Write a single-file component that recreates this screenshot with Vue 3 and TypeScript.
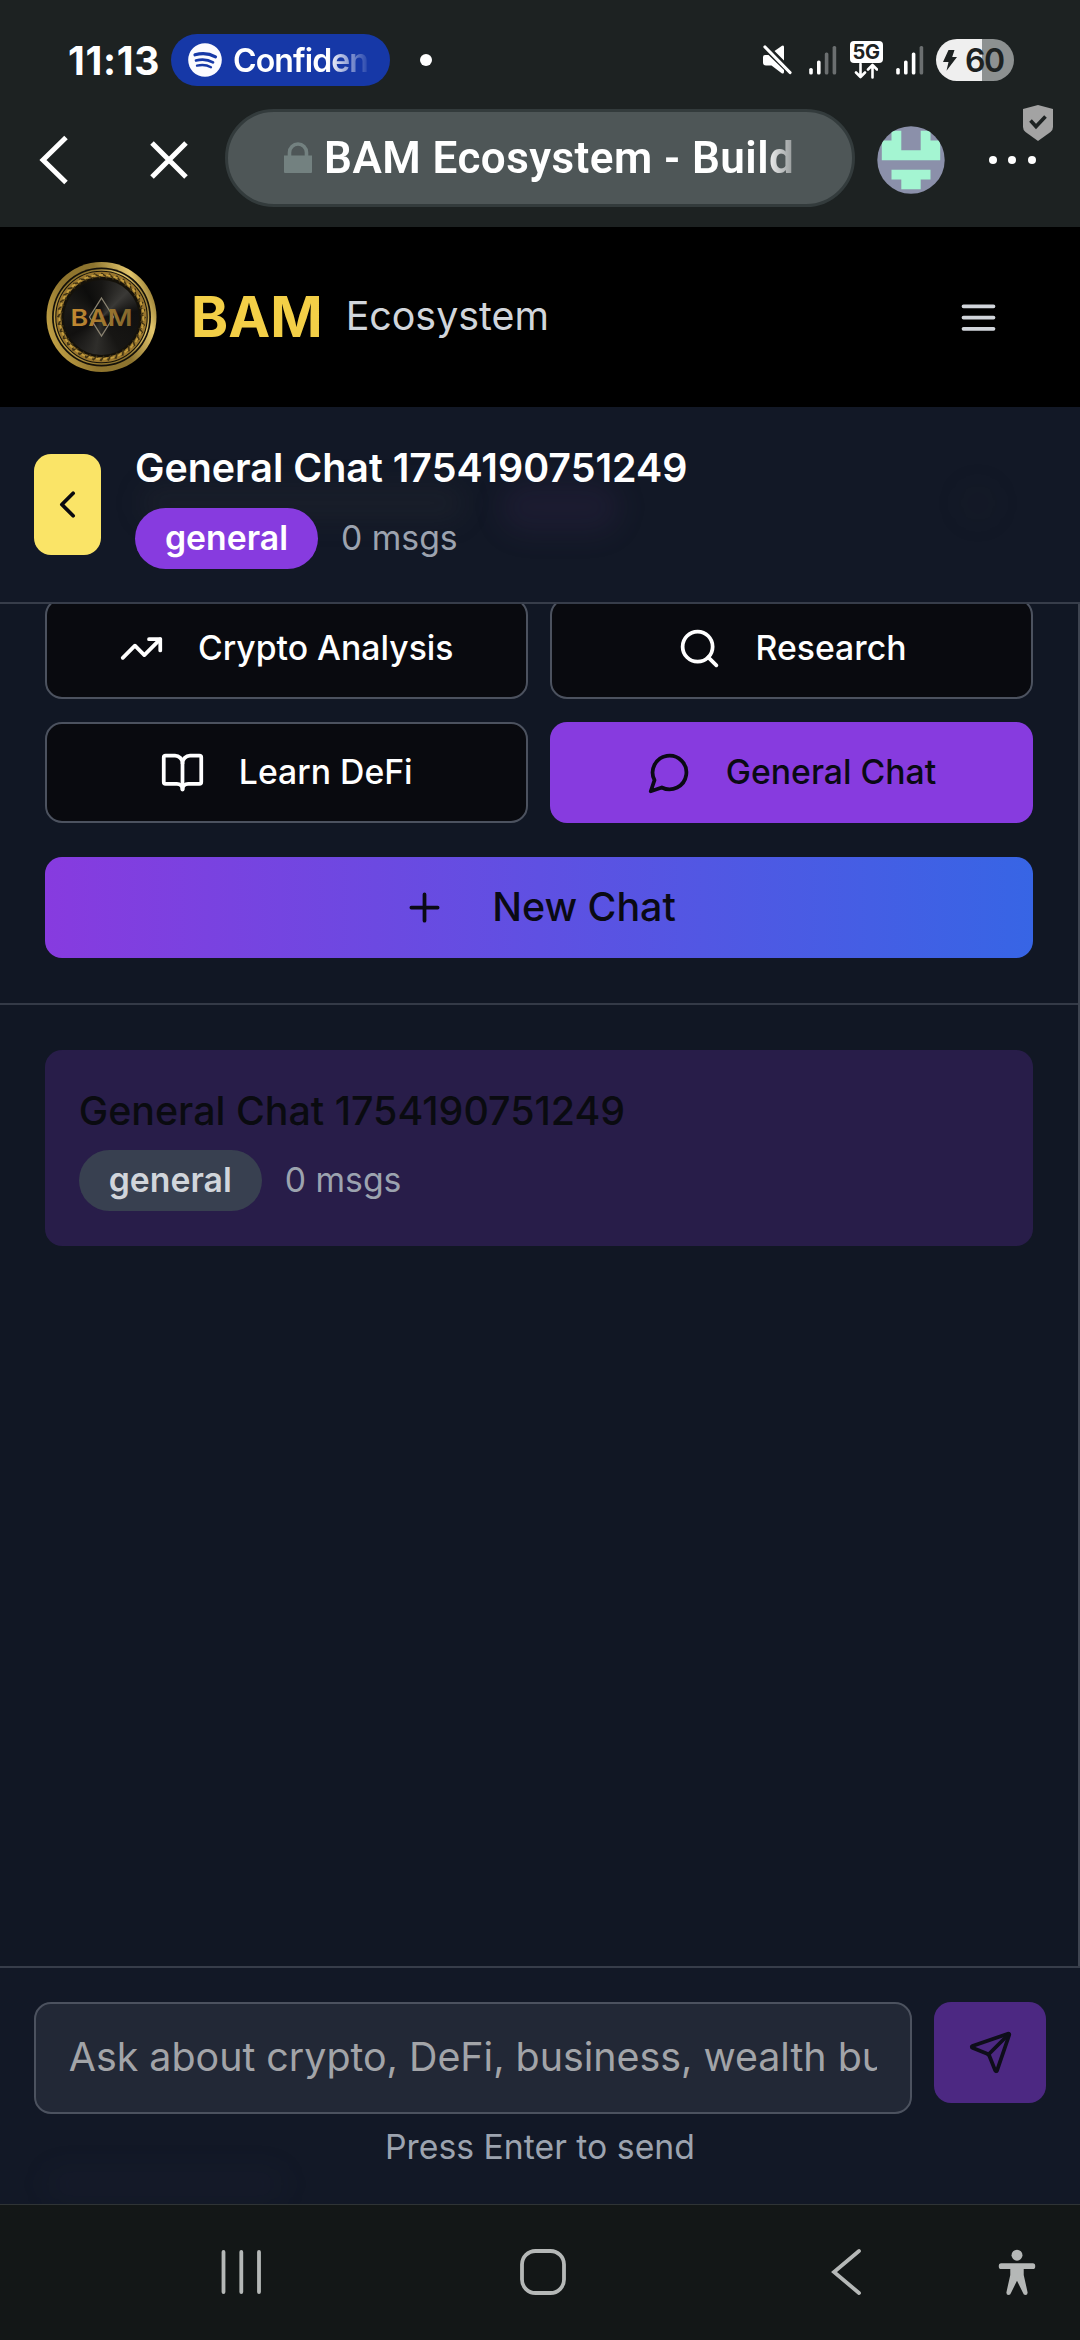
<script setup lang="ts">
interface Topic {
  label: string
  paths: string[]
  active?: boolean
}

const topics: Topic[] = [
  { label: 'Crypto Analysis', paths: ['M22 7 13.5 15.5 8.5 10.5 2 17', 'M16 7h6v6'] },
  { label: 'Research', paths: ['M19 11a8 8 0 1 1-16 0 8 8 0 0 1 16 0Z', 'm21 21-4.3-4.3'] },
  {
    label: 'Learn DeFi',
    paths: [
      'M12 7v14',
      'M3 18a1 1 0 0 1-1-1V4a1 1 0 0 1 1-1h5a4 4 0 0 1 4 4 4 4 0 0 1 4-4h5a1 1 0 0 1 1 1v13a1 1 0 0 1-1 1h-6a3 3 0 0 0-3 3 3 3 0 0 0-3-3z',
    ],
  },
  { label: 'General Chat', paths: ['M7.9 20A9 9 0 1 0 4 16.1L2 22Z'], active: true },
]

const chat = { title: 'General Chat 1754190751249', tag: 'general', count: '0 msgs' }
const leaves = Array.from({ length: 36 }, (_, i) => i * 10)
const signals = [
  { id: 'a', lit: 2 },
  { id: 'b', lit: 3 },
]
const bars = [6.5, 14, 22, 28.5]
</script>

<template>
  <div class="screen">
    <div class="top">
      <div class="status">
        <span class="time">11:13</span>
        <div class="now">
          <svg class="spot" viewBox="0 0 34 34">
            <circle cx="17" cy="17" r="16.8" fill="#fbfbff" />
            <g fill="none" stroke="#1638a7" stroke-linecap="round">
              <path d="M7 11.8c7-2 14.500-1.300 20.500 2" stroke-width="3.200" />
              <path d="M8 17.500c6-1.700 12-1 17 1.900" stroke-width="2.700" />
              <path d="M9 22.700c5-1.300 10-.7 14 1.600" stroke-width="2.300" />
            </g>
          </svg>
          <span class="song">Confiden</span>
        </div>
        <i class="dot"></i>
        <div class="sys">
          <svg class="mute" viewBox="0 0 30 30">
            <path d="M1 12q0-2 2-2h3.500L22 25v2q0 2-2 1.500L9.500 20.500H4q-3 0-3-3ZM12.500 6 20 .8q2-1 2 1.200v13.500Z" fill="#fff" />
            <path d="M3 2 28 27.500" stroke="#fff" stroke-width="3.200" stroke-linecap="round" />
          </svg>
          <template v-for="s in signals" :key="s.id">
            <svg class="sig" viewBox="0 0 28 30">
              <rect
                v-for="(h, i) in bars"
                :key="i"
                :x="0.2 + i * 7.8"
                :y="29.500 - h"
                width="3.600"
                :height="h"
                rx="1.600"
                :fill="i < s.lit ? '#fff' : '#6b6f70'"
              />
            </svg>
            <div v-if="s.id === 'a'" class="net">
              <b>5G</b>
              <svg viewBox="0 0 24 16">
                <path d="M6.500 1v12M2 9.500l4.500 4.500 4.500-4.500M18.500 14.500V2.500M14 6.500 18.500 2 23 6.500" fill="none" stroke="#fff" stroke-width="2.600" stroke-linejoin="round" stroke-linecap="round" />
              </svg>
            </div>
          </template>
          <div class="batt">
            <svg viewBox="0 0 14 21"><path d="M5.500 0h6L9.200 7H14L3.500 20.800 5.500 12H0Z" fill="#1d2222" /></svg>
            <b>60</b>
          </div>
        </div>
      </div>
      <div class="bar">
        <svg class="back" viewBox="0 0 30 50"><path d="M27 2.500 4 25 27 47.500" fill="none" stroke="#fff" stroke-width="5" /></svg>
        <svg class="close" viewBox="0 0 38 38"><path d="M2 2 36 36M36 2 2 36" stroke="#fff" stroke-width="5" /></svg>
        <div class="url">
          <svg class="lock" viewBox="0 0 28 32">
            <path d="M5.500 14V10.500a8.500 8.500 0 0 1 17 0V14" fill="none" stroke="#738180" stroke-width="3.600" />
            <path d="M0 13.500h28v16.500q0 1-1 1H1q-1 0-1-1Z" fill="#738180" />
          </svg>
          <span>BAM Ecosystem - Build</span>
        </div>
        <svg class="avatar" viewBox="0 0 68 68">
          <defs><clipPath id="face"><circle cx="34" cy="34" r="33.700" /></clipPath></defs>
          <g clip-path="url(#face)">
            <rect width="68" height="68" fill="#8b90aa" />
            <path d="M14.500 4.800h9.800v19.500h19.400V4.800h9.800v9.700h9.700v19.700H4.800V14.500h9.700ZM14.500 43.700h39v9.700h-9.800v9.800H24.300v-9.800h-9.800Z" fill="#a4f5d2" />
          </g>
        </svg>
        <div class="more">
          <i></i><i></i><i></i>
          <svg class="shield" viewBox="0 0 30 36">
            <path d="M15 0 30 4v18q0 3-2.500 5L15 36 2.500 27Q0 25 0 22V4Z" fill="#a3a3a3" />
            <path d="M7.500 15.500 13 21.500 22.500 11.500" fill="none" stroke="#1d2222" stroke-width="3.600" />
          </svg>
        </div>
      </div>
    </div>

    <header class="site">
      <svg class="coin" viewBox="0 0 112 112">
        <defs>
          <linearGradient id="gold" x1="0" y1="0.700" x2="1" y2="0.300">
            <stop offset="0" stop-color="#c6a548" />
            <stop offset="0.300" stop-color="#8f742d" />
            <stop offset="0.600" stop-color="#8d742f" />
            <stop offset="0.860" stop-color="#e3c66c" />
            <stop offset="1" stop-color="#8a702a" />
          </linearGradient>
          <linearGradient id="gold2" x1="0" y1="0" x2="1" y2="0">
            <stop offset="0" stop-color="#c48a31" />
            <stop offset="1" stop-color="#80662d" />
          </linearGradient>
        </defs>
        <circle cx="56.500" cy="56" r="55" fill="url(#gold)" />
        <circle cx="56.500" cy="56" r="49.500" fill="#14110a" />
        <circle cx="56.500" cy="56" r="47" fill="none" stroke="url(#gold)" stroke-width="1.500" />
        <circle cx="56.500" cy="56" r="42.700" fill="none" stroke="#99762d" stroke-width="5" />
        <g stroke="#3f3213" stroke-width="1.500">
          <path v-for="a in leaves" :key="a" d="m54 17 3-4.500 4 3" fill="none" :transform="`rotate(${a} 56.500 56)`" />
        </g>
        <circle cx="56.500" cy="56" r="42" fill="none" stroke="#c39c3d" stroke-width="2" stroke-dasharray="4 3.500" />
        <foreignObject x="19" y="18.500" width="75" height="75"><div class="disc"></div></foreignObject>
        <path d="M56.500 37 68.500 56 56.500 75 44.500 56Z" fill="none" stroke="#8a8371" stroke-width="1.300" />
        <text x="56.500" y="65" text-anchor="middle" textLength="62" lengthAdjust="spacingAndGlyphs" font-family="Inter, sans-serif" font-weight="600" font-size="23" fill="url(#gold2)">BAM</text>
      </svg>
      <strong>BAM</strong>
      <span>Ecosystem</span>
      <svg class="icon menu" viewBox="0 0 24 24"><path d="M4 6h16M4 12h16M4 18h16" /></svg>
    </header>

    <section class="head">
      <i class="ghost g1"></i><i class="ghost g2"></i><i class="ghost g3"></i>
      <button class="prev"><svg class="icon" viewBox="0 0 24 24"><path d="m15 18-6-6 6-6" /></svg></button>
      <div class="info">
        <h1>{{ chat.title }}</h1>
        <div class="meta"><span class="tag"><span>{{ chat.tag }}</span></span><span>{{ chat.count }}</span></div>
      </div>
    </section>

    <main class="side">
      <div class="actions">
        <div class="topics">
          <button v-for="t in topics" :key="t.label" :class="['topic', { active: t.active }]">
            <svg class="icon" viewBox="0 0 24 24"><path v-for="p in t.paths" :key="p" :d="p" /></svg>
            <span>{{ t.label }}</span>
          </button>
        </div>
        <button class="new">
          <svg class="icon" viewBox="0 0 24 24"><path d="M5 12h14M12 5v14" /></svg>
          <span>New Chat</span>
        </button>
      </div>
      <div class="card">
        <h2>{{ chat.title }}</h2>
        <div class="meta"><span class="tag"><span>{{ chat.tag }}</span></span><span>{{ chat.count }}</span></div>
      </div>
    </main>

    <footer class="compose">
      <i class="ghost g4"></i>
      <div class="row">
        <div class="field"><span>Ask about crypto, DeFi, business, wealth bu</span></div>
        <button class="send">
          <svg class="icon" viewBox="0 0 24 24">
            <path d="M14.536 21.686a.5.5 0 0 0 .937-.024l6.500-19a.496.496 0 0 0-.635-.635l-19 6.500a.5.5 0 0 0-.024.937l7.930 3.180a2 2 0 0 1 1.112 1.110z" />
            <path d="m21.854 2.147-10.940 10.939" />
          </svg>
        </button>
      </div>
      <p>Press Enter to send</p>
    </footer>

    <nav class="keys">
      <svg class="recents" viewBox="0 0 40 48"><path d="M2.500 4v40M20.300 4v40M38 4v40" stroke-width="3.800" stroke-linecap="round" /></svg>
      <svg class="home" viewBox="0 0 48 48"><rect x="3" y="3" width="42" height="42" rx="13.500" stroke-width="3.800" /></svg>
      <svg class="goback" viewBox="0 0 32 48"><path d="M29 3 4 24 29 45" stroke-width="3.800" stroke-linecap="round" /></svg>
      <svg class="person" viewBox="0 0 40 50">
        <circle cx="20" cy="7.500" r="5.700" fill="#b5b8b7" stroke="none" />
        <path d="M3.500 16h33q2.500 0 2.500 3t-2.500 3H27v6l4 18q.3 3-2.200 3-2 0-2.500-2L20 34l-6.300 13q-.5 2-2.500 2-2.500 0-2.200-3l4-18v-6H3.500Q1 22 1 19t2.500-3Z" fill="#b5b8b7" stroke="none" />
      </svg>
    </nav>
  </div>
</template>

<style>
html { font-size: 45px; }
body { margin: 0; background: #111724; overflow: hidden; }
</style>

<style scoped>
* { box-sizing: border-box; }
.screen { width: 1080px; height: 2340px; display: flex; flex-direction: column; background: #111724; font-family: Inter, sans-serif; overflow: hidden; }
button { border: 0; padding: 0; font: inherit; color: inherit; display: flex; align-items: center; justify-content: center; }
h1, h2, p { margin: 0; }
svg { flex: none; display: block; }
.icon { width: 1rem; height: 1rem; fill: none; stroke: currentColor; stroke-width: 2; stroke-linecap: round; stroke-linejoin: round; }

.top { height: 227px; flex: none; background: #1d2222; }
.status { height: 109px; padding: 11px 66px 0 68px; display: flex; align-items: center; color: #fff; }
.time { width: 103px; font-size: 39px; font-weight: 700; letter-spacing: 0.700px; white-space: nowrap; }
.now { width: 219px; height: 52px; border-radius: 26px; background: #1638a7; display: flex; align-items: center; padding-left: 17px; gap: 11px; }
.spot { width: 34px; height: 34px; }
.song { width: 142px; font-size: 32px; font-weight: 600; letter-spacing: -0.900px; white-space: nowrap; overflow: hidden; -webkit-mask-image: linear-gradient(90deg, #000 95px, transparent 138px); mask-image: linear-gradient(90deg, #000 95px, transparent 138px); }
.dot { width: 12px; height: 12px; border-radius: 50%; background: #fff; margin-left: 30px; }
.sys { margin-left: auto; display: flex; align-items: center; }
.mute { width: 30px; height: 30px; margin-right: 17px; }
.sig { width: 28px; height: 30px; margin-right: 12px; }
.net { width: 34px; height: 38px; margin-right: 13px; display: flex; flex-direction: column; align-items: center; }
.net b { width: 33px; height: 22px; border-radius: 4px; background: #fff; color: #1d2222; font: 700 20px/22px Inter, sans-serif; letter-spacing: -0.5px; text-align: center; }
.net svg { width: 24px; height: 16px; }
.batt { width: 78px; height: 42px; border-radius: 21px; background: linear-gradient(90deg, #efefef 46.500px, #8d9191 46.500px); color: #1d2222; display: flex; align-items: center; padding-left: 7px; gap: 8px; }
.batt svg { width: 14px; height: 21px; }
.batt b { font-size: 32px; font-weight: 600; letter-spacing: -1.500px; }

.bar { height: 98px; display: flex; align-items: center; padding-left: 39px; }
.back { width: 30px; height: 50px; margin-top: 3px; }
.close { width: 38px; height: 38px; margin: 3px 37px 0 81px; }
.url { width: 630px; height: 98px; border-radius: 49px; border: 3px solid #333b3c; background: #4e5657; display: flex; align-items: center; padding-left: 56px; }
.lock { width: 28px; height: 32px; margin-right: 12px; }
.url span { width: 474px; font: 600 44px/52px Roboto, sans-serif; letter-spacing: 0.450px; color: #fff; white-space: nowrap; overflow: hidden; -webkit-mask-image: linear-gradient(90deg, #000 440px, rgba(0, 0, 0, 0.350) 472px); mask-image: linear-gradient(90deg, #000 440px, rgba(0, 0, 0, 0.350) 472px); }
.avatar { width: 68px; height: 68px; margin: 3px 0 0 22px; }
.more { position: relative; margin: 3px 0 0 44px; display: flex; gap: 11.300px; }
.more i { width: 8px; height: 8px; border-radius: 50%; background: #fff; }
.shield { position: absolute; left: 34px; top: -51px; width: 30px; height: 36px; }

.site { height: 180px; flex: none; background: #000; display: flex; align-items: center; padding: 0 1.750rem 0 1rem; }
.coin { width: 112px; height: 112px; }
.disc { width: 75px; height: 75px; border-radius: 50%; background: conic-gradient(#171614, #3a3936 45deg, #11100f 80deg, #171614 150deg, #2f2e2b 190deg, #11100f 240deg, #1c1b18 290deg, #0d0d0c 330deg, #171614); }
.site strong { margin-left: 34px; font-size: 1.250rem; font-weight: 700; color: #f3cf47; }
.site span { margin: -3px 0 0 23px; font-size: 0.875rem; color: #d1d5db; }
.menu { margin-left: auto; color: #d1d5db; }

.head { position: relative; height: 197px; flex: none; border-bottom: 2px solid #373d4a; background: #121826; display: flex; align-items: center; gap: 0.750rem; padding: 0 0.750rem; overflow: hidden; }
.prev { position: relative; width: 1.500rem; height: 2.250rem; border-radius: 17px; background: #fae467; color: #0a0a0f; }
.info { position: relative; }
h1, h2 { font-size: 0.875rem; line-height: 1.250rem; white-space: nowrap; }
h1 { color: #fff; font-weight: 600; }
h2 { color: #0a0b10; font-weight: 500; margin: -1px 0 1px; }
.meta { margin-top: 0.250rem; display: flex; align-items: center; gap: 23px; font-size: 0.750rem; line-height: 1rem; color: #9ca3af; }
.meta > span:last-child { padding-bottom: 2px; }
.tag { height: 61px; padding: 0 30px; border-radius: 31px; display: flex; align-items: center; font-weight: 600; color: #fff; background: #873bdf; }
.tag span { padding-bottom: 2px; }
.ghost { position: absolute; border-radius: 40px; filter: blur(13px); }
.g1 { left: 140px; top: 78px; width: 325px; height: 36px; background: rgba(60, 60, 60, 0.160); }
.g2 { left: 500px; top: 74px; width: 120px; height: 52px; background: rgba(80, 45, 110, 0.150); }
.g3 { left: 960px; top: 78px; width: 36px; height: 36px; background: rgba(50, 50, 50, 0.080); }
.g4 { left: 45px; top: 200px; width: 240px; height: 32px; background: rgba(50, 60, 80, 0.070); }

.side { flex: 1; border-right: 2px solid #3e4450; overflow: hidden; }
.actions { margin-top: -6px; height: 407px; border-bottom: 2px solid #343a47; padding: 0 1rem; }
.topics { display: grid; grid-template-columns: 1fr 1fr; gap: 0.500rem; }
.topic { height: 101.250px; border-radius: 17px; border: 2px solid #4c525f; background: #090a0f; color: #fff; gap: 0.750rem; font-size: 0.750rem; font-weight: 500; }
.topic span, .new span { padding-bottom: 2px; }
.topic.active { border: 0; background: #873bdf; color: #0a0a14; }
.new { width: 100%; height: 101.250px; margin-top: 0.750rem; border-radius: 17px; background: linear-gradient(90deg, #873bdf, #3765e5); color: #0a0a14; gap: 1rem; font-size: 0.875rem; font-weight: 500; }
.card { height: 196px; margin: 1rem 1rem 0; padding: 0.750rem; border-radius: 17px; background: #281d49; }
.card .tag { background: #384050; color: #d1d5db; }

.compose { position: relative; height: 238px; flex: none; border-top: 2px solid #373d4a; background: #121826; padding: 34px 0.750rem 0; overflow: hidden; }
.row { position: relative; display: flex; gap: 0.500rem; align-items: flex-start; }
.field { flex: 1; height: 112px; border: 2px solid #4c525f; border-radius: 17px; background: #222836; padding: 0 33px 2px; display: flex; align-items: center; min-width: 0; }
.field span { width: 100%; overflow: hidden; white-space: nowrap; font-size: 0.875rem; line-height: 56px; color: #a2a4a8; }
.send { width: 112px; height: 101px; border-radius: 17px; background: #4c2882; color: #0e0e1a; }
.compose p { position: relative; margin-top: 10px; text-align: center; font-size: 0.750rem; line-height: 1rem; color: #9ca3af; }

.keys { height: 136px; flex: none; border-top: 1px solid #2f3436; background: #131717; display: flex; align-items: center; padding: 0 0 2px 221px; }
.keys svg { height: 48px; fill: none; stroke: #b5b8b7; }
.recents { width: 40px; margin-right: 258px; }
.home { width: 48px; margin-right: 263px; }
.goback { width: 32px; margin-right: 135px; }
.person { width: 40px; }
</style>
